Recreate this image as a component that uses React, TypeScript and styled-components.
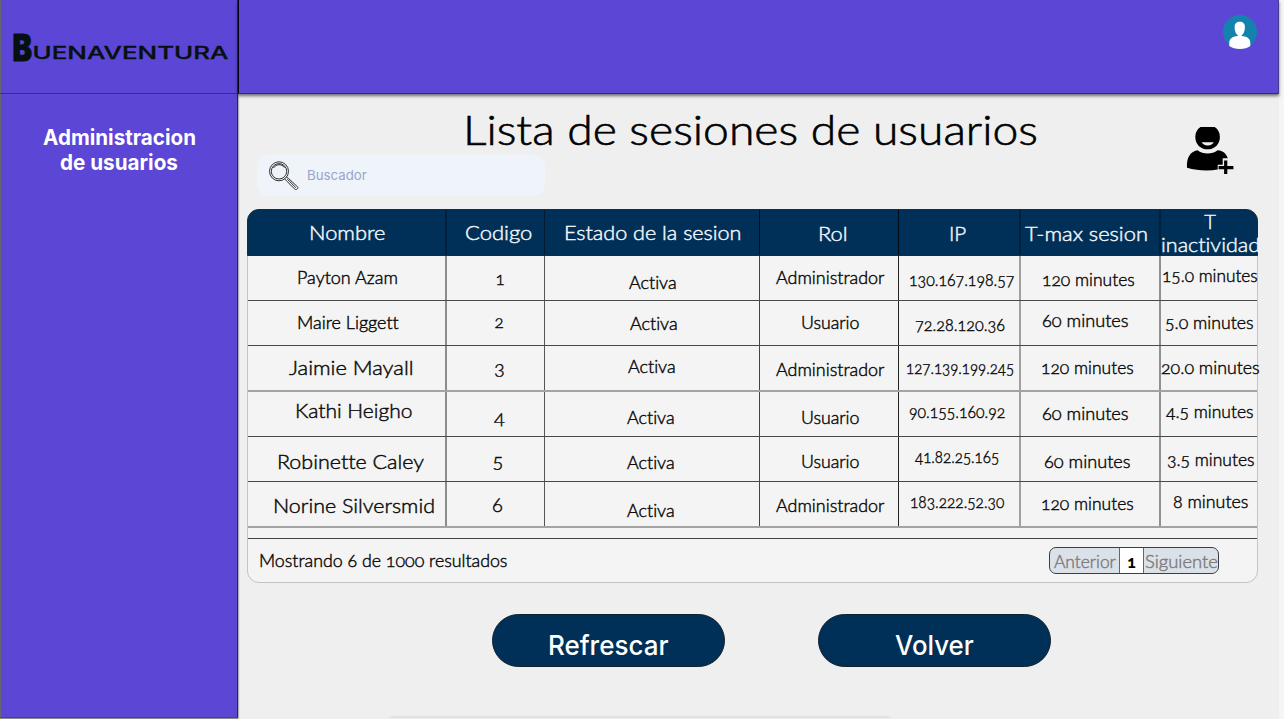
import React, { useLayoutEffect, useRef, useState } from "react";
import styled, { createGlobalStyle } from "styled-components";

const GlobalStyle = createGlobalStyle`
  *, *::before, *::after { box-sizing: border-box; }
  html, body { margin: 0; padding: 0; overflow: hidden; background: #f5f5f5; }
  button { font: inherit; }
`;

const display = `"Lato", "Open Sans", sans-serif`;
const ui = `"Inter", "Roboto", sans-serif`;

/* ---------- text that widens its letters to a given measure ---------- */

const Measure = styled.span`
  display: inline-block;
  vertical-align: top;
  white-space: nowrap;
  line-height: inherit;
  text-align: left;
`;

const Run = styled.span<{ $size: number; $weight: number; $family: string; $stroke: number }>`
  display: inline-block;
  vertical-align: top;
  white-space: nowrap;
  font-family: ${(p) => p.$family};
  font-size: ${(p) => p.$size}px;
  font-weight: ${(p) => p.$weight};
  font-feature-settings: "onum" 1, "kern" 1, "liga" 0;
  -webkit-text-stroke: ${(p) => p.$stroke}px currentColor;
  line-height: inherit;
  transform-origin: left center;
`;

interface FitProps {
  text: string;
  width?: number;
  size?: number;
  weight?: number;
  family?: string;
}

function Fit({ text, width, size = 17, weight = 300, family = display }: FitProps) {
  const ref = useRef<HTMLSpanElement>(null);
  const [scale, setScale] = useState(1);
  useLayoutEffect(() => {
    if (!ref.current || !width || text.length < 2) return;
    setScale(width / ref.current.offsetWidth);
  }, []);
  return (
    <Measure style={{ width }}>
      <Run
        ref={ref}
        $size={size}
        $weight={weight}
        $family={family}
        $stroke={weight === 300 ? 0.3 + size * 0.008 : 0}
        style={{ transform: scale === 1 ? undefined : `scaleX(${scale})` }}
      >
        {text}
      </Run>
    </Measure>
  );
}

/* ---------- page frame ---------- */

const Page = styled.div`
  display: grid;
  grid-template-columns: 238px 1041px;
  grid-template-rows: 94px 624px;
  width: 1284px;
  height: 719px;
  overflow: hidden;
  background: linear-gradient(to right, #efefef 1279px, #f5f5f5 1279px);
`;

const Brand = styled.div`
  background: #5b46d6;
  border-left: 1px solid #66666c;
  border-bottom: 1px solid #21185a;
  border-right: 1px solid #2c1f83;
  padding: 20px 0 0 4px;
`;

const TopBar = styled.header`
  display: flex;
  justify-content: flex-end;
  align-items: flex-start;
  padding: 14px 20px 0 0;
  background: #5b46d6;
  border-left: 1px solid #06040f;
  border-right: 1px solid #48398f;
  border-bottom: 1px solid #352a6c;
  box-shadow: 0 2px 3px rgba(0, 0, 0, 0.55);
  z-index: 1;
`;

const Sidebar = styled.nav`
  background: #5b46d6;
  border-left: 1px solid #66666c;
  border-right: 1px solid #2c1f83;
  border-bottom: 1px solid #4d3ca8;
  box-shadow: 0 1px 1px #8a8a8a, 1px 0 1px #b5b5b5;
  padding-top: 31px;
`;

const NavLink = styled.div`
  display: flex;
  flex-direction: column;
  align-items: center;
  line-height: 25px;
  color: #fff;
`;

const Main = styled.main`
  display: flex;
  flex-direction: column;
  padding-left: 9px;
  min-height: 0;
  overflow: hidden;

  > * { flex: none; }
`;

const Intro = styled.section`
  display: grid;
  grid-template-columns: 938px 50px;
  height: 115px;
`;

const IntroText = styled.div`
  display: flex;
  flex-direction: column;
`;

const Title = styled.h1`
  margin: 0;
  padding: 10px 0 0 216px;
  height: 61px;
  line-height: 50px;
  color: #000;
`;

const Search = styled.label`
  display: flex;
  align-items: center;
  width: 288px;
  height: 41px;
  margin-left: 10px;
  padding-left: 11px;
  gap: 7px;
  border-radius: 11px;
  background: #eef4fa;
  color: #98a6c8;
`;

const AddUser = styled.div`
  padding: 32px 0 0 1px;
`;

/* ---------- table ---------- */

const Card = styled.section`
  width: 1011px;
  height: 374px;
  border: 1px solid #c4c4c4;
  border-radius: 12px;
  background: #f4f4f4;
`;

const HeadRow = styled.div`
  display: flex;
  width: 1011px;
  height: 47px;
  margin: -1px 0 0 -1px;
  background: #003057;
  border: 1px solid #1b2b38;
  border-radius: 12px 12px 0 0;
  color: #f2f5f8;
`;

const Row = styled.div<{ $height: number; $soft?: boolean }>`
  display: flex;
  height: ${(p) => p.$height}px;
  border-bottom: ${(p) => (p.$soft ? "2px solid #a3a3a3" : "1px solid #484848")};
  color: #0c0c0c;
`;

const Cell = styled.div<{ $width: number; $left: number; $top: number; $rule?: string }>`
  flex: none;
  width: ${(p) => p.$width}px;
  padding: ${(p) => p.$top}px 0 0 ${(p) => p.$left}px;
  border-right: ${(p) => p.$rule ?? "none"};
  line-height: 24px;
  white-space: nowrap;
`;

const Stack = styled.div`
  display: flex;
  flex-direction: column;
  align-items: center;
  width: 98px;
  line-height: 23px;
`;

const Spacer = styled.div`
  height: 11px;
  border-bottom: 1px solid #444;
`;

const Foot = styled.div`
  display: flex;
  justify-content: space-between;
  padding: 8px 38px 0 11px;
  line-height: 28px;
  color: #0c0c0c;
`;

const Pager = styled.div`
  display: flex;
  width: 170px;
  height: 27px;
  border: 1px solid #3b3f45;
  border-radius: 7px;
  overflow: hidden;
  background: #dbe1e9;
  line-height: 27px;
  color: #7d7d7d;
`;

const PageStep = styled.span<{ $width: number; $left: number }>`
  width: ${(p) => p.$width}px;
  padding-left: ${(p) => p.$left}px;
`;

const PageNow = styled.span`
  width: 25px;
  border: solid #666;
  border-width: 0 1px;
  background: #fff;
  color: #000;
  text-align: center;
`;

/* ---------- actions ---------- */

const Actions = styled.div`
  display: flex;
  gap: 93px;
  padding: 31px 0 0 245px;
`;

const Action = styled.button`
  width: 233px;
  height: 53px;
  padding: 9px 0 0;
  border: 1px solid #11202c;
  border-radius: 27px;
  background: #003057;
  color: #fff;
  line-height: 40px;
`;

const Sheet = styled.div`
  display: flex;
  width: 514px;
  height: 12px;
  margin: 50px 0 0 136px;
  border: 1px solid #dcdcdc;
  border-radius: 12px 12px 0 0;
  background: #fbfbfb;
  box-shadow: 0 0 3px rgba(0, 0, 0, 0.12);
`;

const SheetPart = styled.div`
  width: 437px;
  border-right: 1px solid #d8d8d8;
`;

/* ---------- data: [text, left edge, measure, baseline, size] ---------- */

type Entry = [string, number, number, number, number?];

const columns = [
  { start: 248, width: 199, rule: "2px solid #8b8b8b", headRule: "2px solid #00213d" },
  { start: 447, width: 98, rule: "1px solid #555", headRule: "1px solid #001a30" },
  { start: 545, width: 215, rule: "1px solid #444", headRule: "1px solid #001220" },
  { start: 760, width: 139, rule: "1px solid #222", headRule: "1px solid #000b15" },
  { start: 899, width: 122, rule: "2px solid #a0a0a0", headRule: "2px solid #00213d" },
  { start: 1021, width: 140, rule: "2px solid #909090", headRule: "2px solid #00213d" },
  { start: 1161, width: 96, rule: undefined, headRule: undefined },
];

const headings: Entry[] = [
  ["Nombre", 309, 76, 240, 20],
  ["Codigo", 465.5, 66.5, 240, 20],
  ["Estado de la sesion", 564.5, 177.5, 240, 20],
  ["Rol", 818.5, 29, 241, 20],
  ["IP", 949.5, 17, 241, 20],
  ["T-max sesion", 1025, 122, 241, 20],
];

const rows: { top: number; height: number; soft?: boolean; cells: Entry[] }[] = [
  { top: 256, height: 45, cells: [
    ["Payton Azam", 297.5, 100, 284], ["1", 496, 7, 285], ["Activa", 629, 47, 289], ["Administrador", 776, 108, 284],
    ["130.167.198.57", 909, 105, 286], ["120 minutes", 1042.5, 92, 286], ["15.0 minutes", 1162, 95, 282]] },
  { top: 301, height: 45, cells: [
    ["Maire Liggett", 297.5, 101, 329], ["2", 495, 8, 328], ["Activa", 630, 47, 330], ["Usuario", 801, 58, 329],
    ["72.28.120.36", 915, 90, 331], ["60 minutes", 1042, 86, 327], ["5.0 minutes", 1165.5, 88, 329]] },
  { top: 346, height: 46, soft: true, cells: [
    ["Jaimie Mayall", 289, 124, 375, 20], ["3", 494.5, 11, 375, 20], ["Activa", 628, 47, 373], ["Administrador", 776, 108, 376],
    ["127.139.199.245", 906.5, 107.5, 374], ["120 minutes", 1041.5, 92, 374], ["20.0 minutes", 1161, 98, 374]] },
  { top: 392, height: 45, cells: [
    ["Kathi Heigho", 295.5, 117, 418, 20], ["4", 494.5, 11, 424, 20], ["Activa", 627.5, 47, 424], ["Usuario", 801, 58, 424],
    ["90.155.160.92", 909.5, 96, 418], ["60 minutes", 1042, 86, 420], ["4.5 minutes", 1166, 87, 418]] },
  { top: 437, height: 45, cells: [
    ["Robinette Caley", 277.5, 146.5, 469, 20], ["5", 493, 10, 468, 20], ["Activa", 627.5, 47, 469], ["Usuario", 801, 58, 468],
    ["41.82.25.165", 915.5, 84, 463], ["60 minutes", 1044.5, 86, 468], ["3.5 minutes", 1167, 87, 466]] },
  { top: 482, height: 46, soft: true, cells: [
    ["Norine Silversmid", 273.5, 161.5, 513, 20], ["6", 492.5, 11, 512, 20], ["Activa", 627.5, 47, 517], ["Administrador", 776, 108, 512],
    ["183.222.52.30", 910.5, 94, 508], ["120 minutes", 1041.5, 92, 510], ["8 minutes", 1173, 75, 508]] },
];

function Slot({ entry, column, top, head }: { entry: Entry; column: number; top: number; head?: boolean }) {
  const [text, left, measure, baseline, size = 17] = entry;
  const col = columns[column];
  const ascent = size === 20 ? 20 : 18;
  return (
    <Cell
      $width={col.width}
      $left={Math.max(0, left - 0.5 - col.start)}
      $top={Math.max(0, baseline - ascent - top)}
      $rule={head ? col.headRule : col.rule}
    >
      <Fit text={text} width={measure + 0.5} size={size} />
    </Cell>
  );
}

/* ---------- drawings ---------- */

const Logo = () => (
  <svg width="230" height="54" viewBox="5 20 230 54" role="img" aria-label="Buenaventura" fill="#06110f">
    <text x="12.500" y="60.800" fontFamily="Inter, sans-serif" fontSize="36.500" fontWeight="900" textLength="19.500" lengthAdjust="spacingAndGlyphs" stroke="#06110f" strokeWidth="1" strokeLinejoin="bevel">B</text>
    <text x="32.500" y="58.900" fontFamily="Inter, sans-serif" fontSize="17" fontWeight="500" textLength="196" lengthAdjust="spacingAndGlyphs" stroke="#06110f" strokeWidth="0.3">UENAVENTURA</text>
  </svg>
);

const Avatar = () => (
  <svg width="36" height="36" viewBox="1222 13 36 36">
    <circle cx="1240" cy="31" r="17" fill="#1581ad" />
    <path fill="#fff" d="M1239.7 20.700c3.500 0 5.200 2 5.200 5.200 0 3.800-1.300 7.100-3.200 8.400v.6c4.600.3 8.600 2.200 8.600 6.700v3.400c-2.500 2-6.200 2.900-10.400 2.900s-8-.9-10.600-2.900v-3.400c0-4.500 4.100-6.400 8.500-6.700v-.6c-1.900-1.300-3.200-4.600-3.200-8.400 0-3.200 1.700-5.200 5.100-5.200z" />
  </svg>
);

const AddUserIcon = () => (
  <svg width="48" height="49" viewBox="1186 126 48 49">
    <path d="M1200.500 127h14.200c3.300 2.200 5.200 5.600 5.200 9.900 0 7.200-5.200 12.400-12.300 12.400s-12.300-5.200-12.300-12.400c0-4.300 1.900-7.700 5.200-9.900z" />
    <path fill="#efefef" d="M1201.700 142.300h12c-.8 2-3 3.200-6 3.200s-5.200-1.200-6-3.200z" />
    <path d="M1197.500 150.300c5.800 4.400 14.400 4.400 20.200 0 5.200.4 8.500 3.200 10 8h-5v6.500h-5v4.800c-9.500 1.700-21 1.100-30.700-1.800-.6-9.500 2.900-16.300 10.500-17.500z" />
    <path fill="none" stroke="#000" strokeWidth="3.200" d="M1225.700 160.600v13.400M1218.600 167.700h14.800" />
  </svg>
);

const Magnifier = () => (
  <svg width="32" height="32" viewBox="268 160 32 32" fill="none" stroke="#1c1c1c" strokeWidth="0.9">
    <circle cx="279" cy="171.300" r="9.500" />
    <circle cx="279" cy="171.300" r="7.700" />
    <path d="M273.500 168c2.300-4 8.300-4.600 11-.4M284.700 178.900l1.700 1.900 8.300 8.200c1.800 1.300 4-.3 2.700-2.300l-8.800-8.200-2-1.400M287.200 179l8.600 8.600" />
  </svg>
);

export default function App() {
  return (
    <>
      <GlobalStyle />
      <Page>
        <Brand><Logo /></Brand>
        <TopBar><Avatar /></TopBar>
        <Sidebar>
          <NavLink>
            <Fit text="Administracion" width={153} size={21} weight={700} family={ui} />
            <Fit text="de usuarios" width={118} size={21} weight={700} family={ui} />
          </NavLink>
        </Sidebar>
        <Main>
          <Intro>
            <IntroText>
              <Title><Fit text="Lista de sesiones de usuarios" width={575} size={42} /></Title>
              <Search>
                <Magnifier />
                <Fit text="Buscador" width={60} size={13.5} weight={400} family={ui} />
              </Search>
            </IntroText>
            <AddUser><AddUserIcon /></AddUser>
          </Intro>
          <Card>
            <HeadRow>
              {headings.map((entry, i) => <Slot key={i} entry={entry} column={i} top={210} head />)}
              <Stack>
                <Fit text="T" size={20} />
                <Fit text="inactividad" width={99} size={20} />
              </Stack>
            </HeadRow>
            {rows.map((row) => (
              <Row key={row.top} $height={row.height} $soft={row.soft}>
                {row.cells.map((entry, i) => <Slot key={i} entry={entry} column={i} top={row.top} />)}
              </Row>
            ))}
            <Spacer />
            <Foot>
              <Fit text="Mostrando 6 de 1000 resultados" width={248} />
              <Pager>
                <PageStep $width={69} $left={4}><Fit text="Anterior" width={61.5} /></PageStep>
                <PageNow><Fit text="1" size={16} weight={900} /></PageNow>
                <PageStep $width={74} $left={1}><Fit text="Siguiente" width={72.5} /></PageStep>
              </Pager>
            </Foot>
          </Card>
          <Actions>
            <Action><Fit text="Refrescar" width={121} size={27.5} weight={500} family={ui} /></Action>
            <Action><Fit text="Volver" width={79} size={27.5} weight={500} family={ui} /></Action>
          </Actions>
          <Sheet><SheetPart /></Sheet>
        </Main>
      </Page>
    </>
  );
}
